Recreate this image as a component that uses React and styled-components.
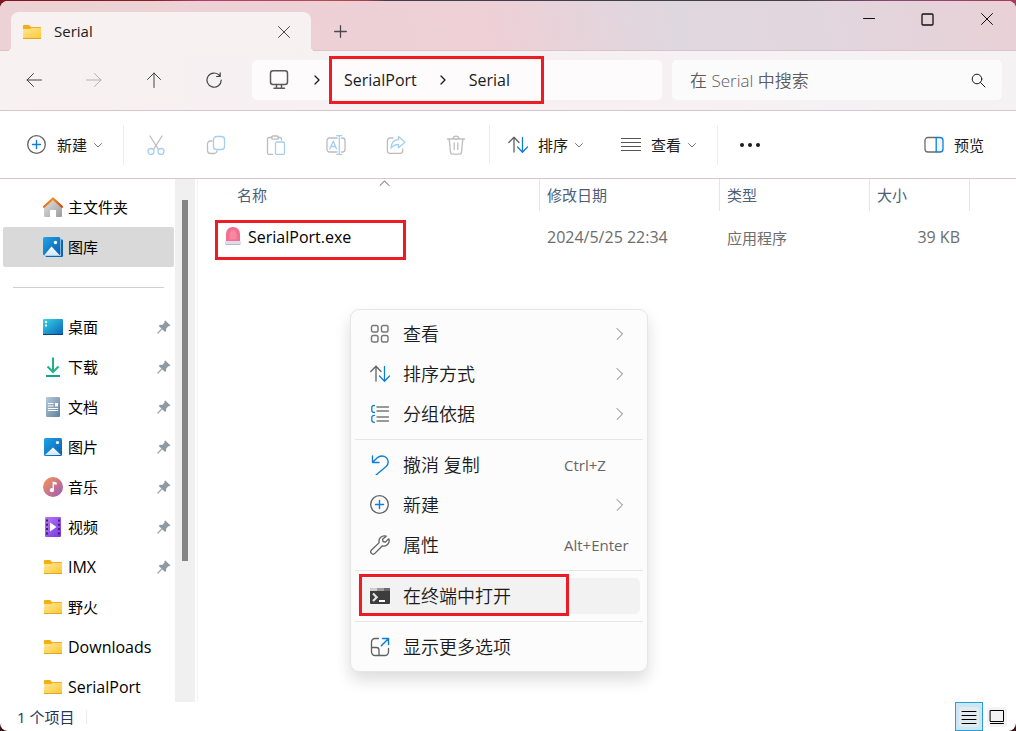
import React from 'react'
import styled, { createGlobalStyle } from 'styled-components'

const GlobalStyle = createGlobalStyle`
    *{
        box-sizing:border-box;
    }
    body{
        margin:0;
        font-family: "Open Sans", "Noto Sans CJK SC", sans-serif;
        font-size:15px;
        color:#1b1b1b;
        background: linear-gradient(#0000 50%, #3a1218 50%),
            linear-gradient(90deg, #7c1620 0%, #8c1c26 15%, #b83a70 20%, #b84a52 32%, #a8444c 36%, #40404c 38%, #40404c 78%, #8c4a74 88%, #a83a5c 100%);
    }
    button, input{
        font-family:inherit;
        font-size:inherit;
        color:inherit;
        border:none;
        background:transparent;
        padding:0;
        margin:0;
    }
    button{
        cursor:pointer;
    }
    a{
        color:inherit;
        text-decoration:none;
    }
    svg{
        display:block;
        flex:none;
    }
`
const Page = styled.div`
    height:100vh;
    padding-top:1px;
`
const Window = styled.div`
    position:relative;
    height:100%;
    display:flex;
    flex-direction:column;
    border-radius:8px;
    overflow:hidden;
    background:#fff;
`

/* title bar */
const TitleBar = styled.header`
    flex:none;
    height:50px;
    display:flex;
    justify-content:space-between;
    padding-left:11px;
    border-bottom:1px solid #d9c4ca;
    background:linear-gradient(80deg, #ecd2d5 0%, #eed0d6 48%, #dfd7df 66%, #e2d6de 80%, #e8d1d7 100%);
`
const Tabs = styled.div`
    display:flex;
    padding-top:11px;
`
const Tab = styled.div`
    position:relative;
    width:300px;
    height:39px;
    display:flex;
    align-items:center;
    padding:0 16px 0 11px;
    border-radius:8px 8px 0 0;
    background:#f7f1f2;
    &::before, &::after{
        content:"";
        position:absolute;
        bottom:0;
        width:4px;
        height:4px;
    }
    &::before{
        right:100%;
        background:radial-gradient(circle at 0 0, transparent 4px, #f7f1f2 4px);
    }
    &::after{
        left:100%;
        background:radial-gradient(circle at 100% 0, transparent 4px, #f7f1f2 4px);
    }
`
const TabName = styled.span`
    flex:1;
    margin-left:12px;
    padding-bottom:2px;
    font-weight:500;
    line-height:20px;
`
const TabButton = styled.button`
    width:22px;
    height:22px;
    display:grid;
    place-items:center;
    color:#4a4a4a;
`
const NewTab = styled(TabButton)`
    width:58px;
    height:39px;
`
const Controls = styled.div`
    display:flex;
`
const Control = styled.button`
    width:59px;
    height:36px;
    display:grid;
    place-items:center;
    color:#111;
`

/* navigation bar */
const NavBar = styled.nav`
    flex:none;
    height:60px;
    display:flex;
    align-items:flex-start;
    padding:9px 14px 0 4px;
    border-bottom:1px solid #d9c6cc;
    background:linear-gradient(90deg, #f7f1f2, #f7f0f3 60%, #f5f2f4);
`
const NavButton = styled.button`
    width:60px;
    height:40px;
    display:grid;
    place-items:center;
    color:${({$off}) => $off ? "#b5b0b1" : "#444"};
`
const Address = styled.div`
    position:relative;
    flex:41 1 410px;
    height:40px;
    display:flex;
    align-items:center;
    margin:0 10px 0 8px;
    padding-left:17px;
    border-radius:5px;
    background:#fdfbfc;
    font-size:16px;
    ol{
        display:flex;
        align-items:center;
        list-style:none;
        margin:0;
        padding:0;
    }
    li{
        display:flex;
        align-items:center;
    }
`
const Crumb = styled.a`
    line-height:24px;
`
const CrumbArrow = styled.span`
    width:${({$wide}) => $wide ? "55px" : "52px"};
    display:grid;
    place-items:center;
`
const Search = styled.label`
    flex:33 1 330px;
    min-width:0;
    height:40px;
    display:flex;
    align-items:center;
    padding:0 16px 0 18px;
    border-radius:5px;
    background:#fcfbfc;
    input{
        flex:1;
        min-width:0;
        font-size:17px;
        outline:none;
    }
    input::placeholder{
        color:#5c5c5c;
        opacity:1;
        font-weight:350;
    }
`

/* command bar */
const CommandBar = styled.div`
    flex:none;
    height:68px;
    display:flex;
    align-items:center;
    padding:0 16px 0 11px;
    border-bottom:1px solid #d9c6cc;
`
const Command = styled.button`
    height:40px;
    display:flex;
    align-items:center;
    padding:0 18px 0 16px;
    gap:10px;
    white-space:nowrap;
    & + &{
        margin-left:4px;
    }
`
const Caret = styled.span`
    margin-left:-3px;
    color:#777;
`
const IconCommand = styled.button`
    width:60px;
    height:40px;
    display:grid;
    place-items:center;
`
const Split = styled.span`
    width:1px;
    height:40px;
    margin:0 2px 0 3px;
    background:#ececec;
`
const Preview = styled(Command)`
    margin-left:auto;
    padding:0 16px;
`

/* body */
const Main = styled.div`
    flex:1;
    min-height:0;
    display:flex;
`
const Sidebar = styled.aside`
    flex:none;
    width:175px;
    overflow:hidden;
    padding:8px 1px 0 3px;
    ul{
        list-style:none;
        margin:0;
        padding:0;
    }
`
const Place = styled.a`
    height:40px;
    display:flex;
    align-items:center;
    padding:0 3px 0 40px;
    border-radius:2px;
    color:#000;
    background:${({$active}) => $active ? "#d9d9d9" : "transparent"};
`
const PlaceName = styled.span`
    flex:1;
    margin-left:5px;
    padding-bottom:${({$latin}) => $latin ? "0" : "2px"};
    font-size:${({$latin}) => $latin ? "16px" : "15px"};
    white-space:nowrap;
`
const SideLine = styled.hr`
    height:1px;
    margin:20px 10px 19px;
    border:none;
    background:#cfcfcf;
`
const ScrollTrack = styled.div`
    flex:none;
    width:20px;
    padding:21px 7px 0;
    background:#f0f0f0;
`
const ScrollThumb = styled.div`
    height:361px;
    background:#858585;
`
const Files = styled.main`
    flex:1;
    min-width:0;
    margin-left:2px;
    border-left:1px solid #f3f3f3;
`
const Table = styled.table`
    width:100%;
    table-layout:fixed;
    border-collapse:separate;
    border-spacing:0;
    th{
        position:relative;
        height:32px;
        padding:0 0 2px 7px;
        border-right:1px solid #e5e5e5;
        text-align:left;
        font-weight:400;
        color:#4c607a;
    }
    th:first-child{
        padding-left:39px;
    }
    th:last-child{
        border-right:none;
    }
    td{
        height:54px;
        padding:0 0 2px 7px;
        font-size:15px;
        color:#6d6d6d;
    }
    td:first-child{
        padding-left:27px;
    }
`
const Col = styled.col`
    width:${({$w}) => $w};
`
const SortMark = styled.span`
    position:absolute;
    top:1px;
    left:181px;
    color:#555;
`
const FileName = styled.a`
    position:relative;
    display:flex;
    align-items:center;
    gap:7px;
    font-size:16px;
    color:#000;
`
const Latin = styled.span`
    font-size:16px;
`
const SizeCell = styled.td`
    && {
        text-align:right;
        padding-right:10px;
        font-size:16px;
    }
`

/* red frames drawn over the parts being pointed at */
const Frame = styled.span`
    position:absolute;
    top:${({$top}) => $top};
    left:${({$left}) => $left};
    width:${({$w}) => $w};
    height:${({$h}) => $h};
    border:3px solid #ed1c24;
    pointer-events:none;
`

/* context menu */
const ContextMenu = styled.div`
    position:absolute;
    top:308px;
    left:350px;
    width:298px;
    display:flex;
    flex-direction:column;
    padding:4px;
    border:1px solid #e6e6e6;
    border-radius:9px;
    background:#fcfcfc;
    box-shadow:0 8px 16px rgba(0,0,0,0.14);
`
const MenuItem = styled.button`
    position:relative;
    height:36px;
    display:flex;
    align-items:center;
    margin:2px 3px;
    padding:0 0 0 12px;
    border-radius:5px;
    text-align:left;
    background:${({$active}) => $active ? "#f2f2f2" : "transparent"};
`
const MenuLabel = styled.span`
    flex:1;
    margin-left:13px;
    font-size:18px;
    font-weight:350;
    line-height:26px;
`
const Shortcut = styled.span`
    width:76px;
    font-size:15px;
    color:#666;
`
const More = styled.span`
    margin-right:16px;
    color:#7a7a7a;
`
const MenuLine = styled.hr`
    flex:none;
    height:1px;
    margin:5px 0;
    border:none;
    background:#e6e6e6;
`

/* status bar */
const StatusBar = styled.footer`
    flex:none;
    height:29px;
    display:flex;
    align-items:center;
    padding:0 5px 0 17px;
    color:#1e395b;
`
const Count = styled.span`
    padding-right:12px;
    border-right:1px solid #ececec;
    line-height:14px;
`
const Views = styled.div`
    margin-left:auto;
    display:flex;
    align-items:stretch;
    align-self:stretch;
`
const ViewButton = styled.button`
    width:28px;
    display:grid;
    place-items:center;
    color:#000;
    border:1px solid ${({$active}) => $active ? "#26a0da" : "transparent"};
    background:${({$active}) => $active ? "#cde6f3" : "transparent"};
`
const Tile = styled.span`
    width:20px;
    height:20px;
    display:grid;
    place-items:center;
    border-radius:3px;
    background:${({$active}) => $active ? "#e1ecf1" : "#f3f3f3"};
`

const Stroke = ({ w = 20, h = w, sw = 1, children }) => (
    <svg width={w} height={h} viewBox={`0 0 ${w} ${h}`} fill="none" stroke="currentColor" strokeWidth={sw} strokeLinecap="round" strokeLinejoin="round" aria-hidden="true">
        {children}
    </svg>
)

const BLUE = "#0f7fd6"
const GREY = "#616161"

const CloseIcon = () => <Stroke w={12}><path d="M.5.5l11 11M11.5.5l-11 11"/></Stroke>
const ChevronDown = () => <Stroke w={8}><path d="M.5 2.500L4 6l3.500-3.500"/></Stroke>
const ChevronRight = () => <Stroke w={8} h={12}><path d="M1 .5L6.500 6 1 11.500"/></Stroke>
const CrumbChevron = () => <Stroke w={6} h={10} sw={1.3}><path d="M1 1l4 4-4 4"/></Stroke>

const PlusCircle = () => (
    <Stroke w={20}>
        <circle cx="9.500" cy="9.500" r="8.800" stroke={GREY} strokeWidth="1.300"/>
        <path d="M9.500 5.500v8M5.500 9.500h8" stroke={BLUE} strokeWidth="1.400"/>
    </Stroke>
)
const SortIcon = () => (
    <Stroke w={20} sw={1.3}>
        <path d="M6 17V2.500M.8 7.500L6 2.300 11 7.500" stroke={GREY}/>
        <path d="M14.500 2.500V17M9.500 12l5 5.200L19.500 12" stroke={BLUE}/>
    </Stroke>
)
const LinesIcon = () => (
    <Stroke w={20} sw={1.2}>
        <path d="M.5 3.500h19M.5 7.500h19M.5 11.500h19M.5 15.500h19" stroke="#555"/>
    </Stroke>
)
const CutIcon = () => (
    <Stroke w={20} sw={1.3}>
        <path d="M4 1l8.500 13.500M16 1L7.500 14.500" stroke="#bdbdbd"/>
        <circle cx="5" cy="16.500" r="3" stroke="#a3cfef"/>
        <circle cx="15" cy="16.500" r="3" stroke="#a3cfef"/>
    </Stroke>
)
const CopyIcon = () => (
    <Stroke w={20} sw={1.3}>
        <path d="M6 6H4.500a3 3 0 0 0-3 3v6.500a3 3 0 0 0 3 3H8a3 3 0 0 0 3-2.500" stroke="#bdbdbd"/>
        <rect x="7.500" y="1.500" width="11" height="13" rx="3" stroke="#a3cfef"/>
    </Stroke>
)
const PasteIcon = () => (
    <Stroke w={20} sw={1.3}>
        <path d="M6 2.500H3a1.500 1.500 0 0 0-1.500 1.500v14A1.500 1.500 0 0 0 3 19.400h3.500M12 2.500h2A1.500 1.500 0 0 1 15.500 4v1" stroke="#bdbdbd"/>
        <rect x="5.500" y="1" width="7" height="3.200" rx="1.500" stroke="#bdbdbd"/>
        <rect x="9.500" y="7" width="9" height="12.400" rx="1.500" stroke="#a3cfef"/>
    </Stroke>
)
const RenameIcon = () => (
    <Stroke w={20} sw={1.3}>
        <path d="M11 3H3.500A2.500 2.500 0 0 0 1 5.500v9A2.500 2.500 0 0 0 3.500 17H11M15.500 3h1A2.500 2.500 0 0 1 19 5.500v9a2.500 2.500 0 0 1-2.500 2.500h-1" stroke="#bdbdbd"/>
        <path d="M3.800 14L7.300 6.200 10.500 14M5 11.500h4.500M13.300 1v18.500M10.800.7h5M10.800 19.500h5" stroke="#a3cfef"/>
    </Stroke>
)
const ShareIcon = () => (
    <Stroke w={20} sw={1.3}>
        <path d="M7 3H4a2.600 2.600 0 0 0-2.600 2.600v10A2.600 2.600 0 0 0 4 18.300h10a2.600 2.600 0 0 0 2.600-2.600V14" stroke="#bdbdbd"/>
        <path d="M12.500 1.500L19 7.200l-6.500 5.500V9.500c-3.500 0-5.500 1-7.500 3.500.3-5 3-8 7.500-8.300z" stroke="#a3cfef"/>
    </Stroke>
)
const TrashIcon = () => (
    <Stroke w={20} sw={1.3}>
        <path d="M1.500 4h17M7.200 4a2.800 2.800 0 0 1 5.600 0M3.200 4l1.300 13.200a2 2 0 0 0 2 1.900h7a2 2 0 0 0 2-1.900L16.800 4M8.200 8v6.500M11.800 8v6.500" stroke="#bdbdbd"/>
    </Stroke>
)
const PreviewIcon = () => (
    <Stroke w={20} sw={1.3}>
        <path d="M12 2.500H4A3 3 0 0 0 1 5.500v8.500a3 3 0 0 0 3 3h8" stroke="#6b6b6b"/>
        <path d="M12.200 2.500H16a3 3 0 0 1 3 3v8.500a3 3 0 0 1-3 3h-3.800z" stroke={BLUE} fill="#eef7fe"/>
    </Stroke>
)
const ComputerIcon = () => (
    <Stroke w={20} sw={1.5}>
        <rect x="1.500" y=".8" width="17" height="13.700" rx="2.500" stroke="#5a5a5a"/>
        <path d="M7.500 14.500V18M12.500 14.500V18M5 18.200h10.500" stroke="#5a5a5a"/>
    </Stroke>
)
const GridIcon = () => (
    <Stroke w={20} sw={1.4}>
        <g stroke="#777">
            <rect x="1.500" y="1.500" width="6.500" height="6.500" rx="1.800"/>
            <rect x="11.500" y="1.500" width="6.500" height="6.500" rx="1.800"/>
            <rect x="1.500" y="11.500" width="6.500" height="6.500" rx="1.800"/>
            <rect x="11.500" y="11.500" width="6.500" height="6.500" rx="1.800"/>
        </g>
    </Stroke>
)
const GroupIcon = () => (
    <Stroke w={20} sw={1.3}>
        <path d="M7 3h11.500M7 7h11.500M7 13h11.500M7 17h11.500" stroke="#777"/>
        <path d="M4.500 1.500C2.600 1.500 1.800 2.200 1.800 3.500v3c0 1.300.8 2 2.700 2M4.500 11.300c-1.900 0-2.700.7-2.700 2v3c0 1.300.8 2 2.700 2" stroke={BLUE}/>
    </Stroke>
)
const UndoIcon = () => (
    <Stroke w={20} sw={1.4}>
        <path d="M2.500 1v6.500H9M2.700 7.300l4.600-4.500C10 .3 13.800.4 16.200 2.600c2.700 2.500 2.500 6.200.2 8.700L6 20" stroke={BLUE}/>
    </Stroke>
)
const WrenchIcon = () => (
    <Stroke w={20} sw={1.3}>
        <path d="M16.200 1.200a5.300 5.300 0 0 0-7 6.400L1.500 15a2.300 2.300 0 0 0 3.400 3.400l7.500-7.600a5.300 5.300 0 0 0 6.400-7l-3.400 3.300-2.300-.6-.6-2.300z" stroke={GREY}/>
    </Stroke>
)
const TerminalIcon = () => (
    <svg width="20" height="20" viewBox="0 0 20 20" aria-hidden="true">
        <rect y="2" width="20" height="16" rx="1" fill="#3d3d3d"/>
        <path d="M0 3a1 1 0 0 1 1-1h6v3H0z" fill="#cfcfcf"/>
        <path d="M7 2h7v3H7z" fill="#9a9a9a"/>
        <path d="M14 2h5a1 1 0 0 1 1 1v2h-6z" fill="#6b6b6b"/>
        <path d="M3 7.500l3.700 3.700L3 15" fill="none" stroke="#e4e4e4" strokeWidth="2.200"/>
        <path d="M9 15h6" stroke="#fff" strokeWidth="2"/>
    </svg>
)
const MoreOptionsIcon = () => (
    <Stroke w={20} sw={1.3}>
        <path d="M8.500 1.500H5a3.500 3.500 0 0 0-3.500 3.500v10A3.500 3.500 0 0 0 5 18.500h10a3.500 3.500 0 0 0 3.500-3.500v-3.500M1.500 10.500h5a2.500 2.500 0 0 1 2.500 2.500v5.500" stroke={GREY}/>
        <path d="M12.500 1.500h6v6M18.300 1.700l-7 7" stroke={BLUE} strokeWidth="1.500"/>
    </Stroke>
)

const FolderIcon = () => (
    <svg width="20" height="20" viewBox="0 0 20 20" aria-hidden="true">
        <defs>
            <linearGradient id="folder" x1="0" y1="0" x2="1" y2="1">
                <stop offset="0" stopColor="#ffe69a"/>
                <stop offset="1" stopColor="#fdc935"/>
            </linearGradient>
        </defs>
        <path d="M1 4a1 1 0 0 1 1-1h5l2 2h9.500a.5.500 0 0 1 .5.500V8H1z" fill="#f3ae14"/>
        <path d="M1 7h7l1.500-1H19v10H1z" fill="url(#folder)"/>
        <path d="M1 16h18v1H1z" fill="#e6a51d"/>
    </svg>
)
const HomeIcon = () => (
    <svg width="20" height="20" viewBox="0 0 20 20" aria-hidden="true">
        <defs>
            <linearGradient id="wall" x1="0" y1="0" x2="1" y2="1">
                <stop offset="0" stopColor="#e6e6e6"/>
                <stop offset="1" stopColor="#9c9c9c"/>
            </linearGradient>
            <linearGradient id="roof" x1="0" y1="0" x2="1" y2="1">
                <stop offset="0" stopColor="#f9a01b"/>
                <stop offset="1" stopColor="#d8400f"/>
            </linearGradient>
        </defs>
        <path d="M1 8.500l9-7.500 9 7.500V19a1 1 0 0 1-1 1h-5v-7H7v7H2a1 1 0 0 1-1-1z" fill="url(#wall)"/>
        <path d="M1 9.800L10 1.500l9 8.300" fill="none" stroke="url(#roof)" strokeWidth="2.200" strokeLinecap="round" strokeLinejoin="round"/>
    </svg>
)
const PhotoDefs = () => (
    <defs>
        <linearGradient id="sky" x1="0" y1="0" x2="1" y2="1">
            <stop offset="0" stopColor="#1da4e8"/>
            <stop offset="1" stopColor="#0b5cad"/>
        </linearGradient>
        <linearGradient id="hill" x1="0" y1="0" x2="0" y2="1">
            <stop offset="0" stopColor="#fff"/>
            <stop offset="1" stopColor="#cfe8fb"/>
        </linearGradient>
    </defs>
)
const GalleryIcon = () => (
    <svg width="20" height="20" viewBox="0 0 20 20" aria-hidden="true">
        <PhotoDefs/>
        <path d="M18.200 2.500h.8a1 1 0 0 1 1 1V19a1 1 0 0 1-1 1H3.500a1 1 0 0 1-1-1z" fill="#1064b6"/>
        <rect width="18" height="19" rx="1.500" fill="#fff"/>
        <rect width="17.500" height="18.500" rx="1.500" fill="url(#sky)"/>
        <path d="M1 18.500L8.500 9.500 17 18.500z" fill="url(#hill)"/>
        <circle cx="12.500" cy="5.500" r="1.700" fill="#fff"/>
    </svg>
)
const PictureIcon = () => (
    <svg width="20" height="20" viewBox="0 0 20 20" aria-hidden="true">
        <PhotoDefs/>
        <rect x="1" y="1" width="18" height="18" rx="1.500" fill="url(#sky)"/>
        <path d="M2 18L10 10.500 18 18z" fill="url(#hill)"/>
        <circle cx="14.500" cy="5.500" r="1.600" fill="#fff"/>
    </svg>
)
const DesktopIcon = () => (
    <svg width="20" height="20" viewBox="0 0 20 20" aria-hidden="true">
        <defs>
            <linearGradient id="desk" x1="0" y1="0" x2="1" y2="1">
                <stop offset="0" stopColor="#35d6e6"/>
                <stop offset="1" stopColor="#0b62b8"/>
            </linearGradient>
        </defs>
        <rect y="2" width="20" height="16" rx="1" fill="url(#desk)"/>
        <path d="M0 17h20v.5a.5.500 0 0 1-.5.500H.5A.5.500 0 0 1 0 17.500z" fill="#0a3f78"/>
        <path d="M2 4h2v2H2zM2 7.500h2v2H2z" fill="#fff"/>
    </svg>
)
const DownloadIcon = () => (
    <svg width="20" height="20" viewBox="0 0 20 20" fill="none" aria-hidden="true">
        <path d="M10 .5v14M4.500 9.500L10 15l5.500-5.500" stroke="#1fb28d" strokeWidth="2"/>
        <path d="M3 19h14" stroke="#14a38b" strokeWidth="2"/>
    </svg>
)
const DocumentIcon = () => (
    <svg width="20" height="20" viewBox="0 0 20 20" aria-hidden="true">
        <defs>
            <linearGradient id="doc" x1="0" y1="0" x2="1" y2="1">
                <stop offset="0" stopColor="#b9cadb"/>
                <stop offset="1" stopColor="#5e7f9f"/>
            </linearGradient>
        </defs>
        <rect x="3" width="14" height="20" rx="1.200" fill="url(#doc)"/>
        <path d="M5 6.500h5.500M5 9h5.500M5 11.500h10M5 13.500h10" stroke="#fff" strokeWidth="1.200"/>
        <path d="M12 6h3v3.500h-3z" fill="#fff"/>
    </svg>
)
const MusicIcon = () => (
    <svg width="20" height="20" viewBox="0 0 20 20" aria-hidden="true">
        <defs>
            <linearGradient id="disc" x1="0" y1="0" x2="1" y2="1">
                <stop offset="0.100" stopColor="#f0925a"/>
                <stop offset="0.900" stopColor="#a65cb4"/>
            </linearGradient>
        </defs>
        <circle cx="10" cy="10" r="10" fill="url(#disc)"/>
        <path d="M9.700 4.500l4 1v2.300l-2.700-.6v6.200" fill="#fff"/>
        <path d="M10.300 5v8" stroke="#fff" strokeWidth="1.400"/>
        <circle cx="8.900" cy="13.200" r="2.100" fill="#fff"/>
    </svg>
)
const VideoIcon = () => (
    <svg width="20" height="20" viewBox="0 0 20 20" aria-hidden="true">
        <defs>
            <linearGradient id="film" x1="0" y1="0" x2="1" y2="1">
                <stop offset="0" stopColor="#b57af5"/>
                <stop offset="1" stopColor="#7a35e0"/>
            </linearGradient>
        </defs>
        <rect x="2" width="16" height="20" rx="1" fill="url(#film)"/>
        <path d="M4 2.500v15M16 2.500v15" stroke="#3d1d70" strokeWidth="2" strokeDasharray="2 2.300"/>
        <path d="M7 5.500l6.500 4.500L7 14.500z" fill="#fff"/>
    </svg>
)
const PinIcon = () => (
    <svg width="14" height="14" viewBox="0 0 14 14" aria-hidden="true">
        <path d="M8.300.5L13.500 5.500 12.300 6.300 11.300 6.200 9.200 8.500 9 11.300 8 12 5.200 9.300 1.200 13.400.3 13.700.6 12.600 4.500 8.600 1.800 6 2.500 5 5.500 4.700 7.500 2.700 7.300 1.500z" fill="#8d99a3"/>
    </svg>
)
const SirenIcon = () => (
    <svg width="16" height="20" viewBox="0 0 16 20" aria-hidden="true">
        <path d="M1 14.500V7.500C1 3 3.500 0 8 0s7 3 7 7.500v7z" fill="#f0708f"/>
        <path d="M4.500 12.500V7.500C4.500 4.500 6 3 8 3s3.500 1.500 3.500 4.500v5z" fill="#fb86a3"/>
        <rect y="14" width="16" height="4" rx="1" fill="#dcdcec"/>
        <path d="M1 17.500h14" stroke="#b9b9d2"/>
    </svg>
)

const places = [
    { name: "桌面", Icon: DesktopIcon, pinned: true },
    { name: "下载", Icon: DownloadIcon, pinned: true },
    { name: "文档", Icon: DocumentIcon, pinned: true },
    { name: "图片", Icon: PictureIcon, pinned: true },
    { name: "音乐", Icon: MusicIcon, pinned: true },
    { name: "视频", Icon: VideoIcon, pinned: true },
    { name: "IMX", Icon: FolderIcon, pinned: true, latin: true },
    { name: "野火", Icon: FolderIcon },
    { name: "Downloads", Icon: FolderIcon, latin: true },
    { name: "SerialPort", Icon: FolderIcon, latin: true },
]

const fileCommands = [
    { label: "剪切", Icon: CutIcon },
    { label: "复制", Icon: CopyIcon },
    { label: "粘贴", Icon: PasteIcon },
    { label: "重命名", Icon: RenameIcon },
    { label: "共享", Icon: ShareIcon },
    { label: "删除", Icon: TrashIcon },
]

const menuGroups = [
    [
        { label: "查看", Icon: GridIcon, more: true },
        { label: "排序方式", Icon: SortIcon, more: true },
        { label: "分组依据", Icon: GroupIcon, more: true },
    ],
    [
        { label: "撤消 复制", Icon: UndoIcon, keys: "Ctrl+Z" },
        { label: "新建", Icon: PlusCircle, more: true },
        { label: "属性", Icon: WrenchIcon, keys: "Alt+Enter" },
    ],
    [{ label: "在终端中打开", Icon: TerminalIcon, active: true }],
    [{ label: "显示更多选项", Icon: MoreOptionsIcon }],
]

const Header = () => (
    <TitleBar>
        <Tabs>
            <Tab>
                <FolderIcon/>
                <TabName>Serial</TabName>
                <TabButton aria-label="关闭标签页"><CloseIcon/></TabButton>
            </Tab>
            <NewTab aria-label="新标签页">
                <Stroke w={13} sw={1.3}><path d="M6.500.7v11.600M.7 6.500h11.600"/></Stroke>
            </NewTab>
        </Tabs>
        <Controls>
            <Control aria-label="最小化">
                <Stroke w={12}><path d="M.5 5.500h11"/></Stroke>
            </Control>
            <Control aria-label="最大化">
                <Stroke w={13} sw={1.3}><rect x="1" y="1" width="11" height="11" rx="1"/></Stroke>
            </Control>
            <Control aria-label="关闭"><CloseIcon/></Control>
        </Controls>
    </TitleBar>
)

const Navigation = () => (
    <NavBar>
        <NavButton aria-label="后退">
            <Stroke w={16}><path d="M15.500 8H1M7.500 1.500L1 8l6.500 6.500"/></Stroke>
        </NavButton>
        <NavButton aria-label="前进" $off>
            <Stroke w={16}><path d="M.5 8H15M8.500 1.500L15 8l-6.500 6.500"/></Stroke>
        </NavButton>
        <NavButton aria-label="上移">
            <Stroke w={16}><path d="M8 15.500V1M1.500 7.500L8 1l6.500 6.500"/></Stroke>
        </NavButton>
        <NavButton aria-label="刷新">
            <Stroke w={16} sw={1.2}><path d="M13.500 3.500A7.100 7.100 0 1 0 15.200 8M14.200.8v3.700h-3.700"/></Stroke>
        </NavButton>
        <Address>
            <ComputerIcon/>
            <ol>
                <li>
                    <CrumbArrow $wide><CrumbChevron/></CrumbArrow>
                    <Crumb href="#serialport">SerialPort</Crumb>
                </li>
                <li>
                    <CrumbArrow><CrumbChevron/></CrumbArrow>
                    <Crumb href="#serial">Serial</Crumb>
                </li>
            </ol>
            <Frame $top="-4px" $left="77px" $w="215px" $h="48px"/>
        </Address>
        <Search>
            <input type="search" placeholder="在 Serial 中搜索" aria-label="搜索"/>
            <Stroke w={15}><circle cx="6" cy="6" r="4.800"/><path d="M9.500 9.500l4.500 4.500"/></Stroke>
        </Search>
    </NavBar>
)

const Commands = () => (
    <CommandBar>
        <Command>
            <PlusCircle/>
            新建
            <Caret><ChevronDown/></Caret>
        </Command>
        <Split/>
        {fileCommands.map(({ label, Icon }) => (
            <IconCommand key={label} aria-label={label}><Icon/></IconCommand>
        ))}
        <Split/>
        <Command>
            <SortIcon/>
            排序
            <Caret><ChevronDown/></Caret>
        </Command>
        <Command>
            <LinesIcon/>
            查看
            <Caret><ChevronDown/></Caret>
        </Command>
        <Split/>
        <IconCommand aria-label="查看更多">
            <svg width="22" height="6" viewBox="0 0 22 6" fill="#1b1b1b" aria-hidden="true">
                <circle cx="3" cy="3" r="2"/>
                <circle cx="11" cy="3" r="2"/>
                <circle cx="19" cy="3" r="2"/>
            </svg>
        </IconCommand>
        <Preview>
            <PreviewIcon/>
            预览
        </Preview>
    </CommandBar>
)

const Places = () => (
    <Sidebar>
        <Place href="#home">
            <HomeIcon/>
            <PlaceName>主文件夹</PlaceName>
        </Place>
        <Place href="#gallery" $active>
            <GalleryIcon/>
            <PlaceName>图库</PlaceName>
        </Place>
        <SideLine/>
        <ul>
            {places.map(({ name, Icon, pinned, latin }) => (
                <li key={name}>
                    <Place href={"#" + name}>
                        <Icon/>
                        <PlaceName $latin={latin}>{name}</PlaceName>
                        {pinned && <PinIcon/>}
                    </Place>
                </li>
            ))}
        </ul>
    </Sidebar>
)

const FileTable = () => (
    <Table>
        <colgroup>
            <Col $w="342px"/>
            <Col $w="180px"/>
            <Col $w="150px"/>
            <Col $w="100px"/>
            <Col/>
        </colgroup>
        <thead>
            <tr>
                <th>
                    名称
                    <SortMark>
                        <Stroke w={11} h={6}><path d="M1 5.500L5.500 1 10 5.500"/></Stroke>
                    </SortMark>
                </th>
                <th>修改日期</th>
                <th>类型</th>
                <th>大小</th>
                <th aria-hidden="true"/>
            </tr>
        </thead>
        <tbody>
            <tr>
                <td>
                    <FileName href="#serialport-exe">
                        <SirenIcon/>
                        SerialPort.exe
                        <Frame $top="-6px" $left="-10px" $w="191px" $h="40px"/>
                    </FileName>
                </td>
                <td><Latin>2024/5/25 22:34</Latin></td>
                <td>应用程序</td>
                <SizeCell>39 KB</SizeCell>
                <td/>
            </tr>
        </tbody>
    </Table>
)

const Menu = () => (
    <ContextMenu role="menu">
        {menuGroups.map((group, i) => (
            <React.Fragment key={i}>
                {i > 0 && <MenuLine/>}
                {group.map(({ label, Icon, more, keys, active }) => (
                    <MenuItem key={label} role="menuitem" $active={active}>
                        <Icon/>
                        <MenuLabel>{label}</MenuLabel>
                        {keys && <Shortcut>{keys}</Shortcut>}
                        {more && <More><ChevronRight/></More>}
                        {active && <Frame $top="-4px" $left="1px" $w="210px" $h="42px"/>}
                    </MenuItem>
                ))}
            </React.Fragment>
        ))}
    </ContextMenu>
)

const App = () => {
  return (
    <Page>
        <GlobalStyle/>
        <Window>
            <Header/>
            <Navigation/>
            <Commands/>
            <Main>
                <Places/>
                <ScrollTrack><ScrollThumb/></ScrollTrack>
                <Files>
                    <FileTable/>
                </Files>
            </Main>
            <StatusBar>
                <Count>1 个项目</Count>
                <Views>
                    <ViewButton $active aria-label="详细信息">
                        <Tile $active>
                            <Stroke w={16}><path d="M1 2.500h14M1 6.500h14M1 10.500h14M1 14.500h14"/></Stroke>
                        </Tile>
                    </ViewButton>
                    <ViewButton aria-label="大图标">
                        <Tile>
                            <Stroke w={16}><rect x="1.500" y="1.500" width="13" height="11"/><path d="M1.500 14.500h13"/></Stroke>
                        </Tile>
                    </ViewButton>
                </Views>
            </StatusBar>
            <Menu/>
        </Window>
    </Page>
  )
}

export default App
